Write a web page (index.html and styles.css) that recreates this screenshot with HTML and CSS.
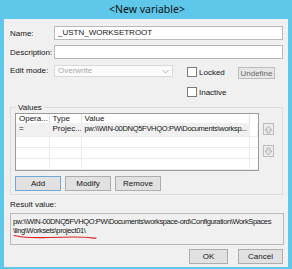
FILE: index.html
```html
<!DOCTYPE html>
<html>
<head>
<meta charset="utf-8">
<link rel="stylesheet" href="styles.css">
</head>
<body>
<div class="win">
  <div class="title">&lt;New variable&gt;</div>
  <div class="panel">
    <div class="row">
      <span class="lbl">Name:</span>
      <div class="input">_USTN_WORKSETROOT</div>
    </div>
    <div class="row row-desc">
      <span class="lbl">Description:</span>
      <div class="input"></div>
    </div>
    <div class="row row-mode">
      <span class="lbl lbl-mode">Edit mode:</span>
      <div class="select">
        <span>Overwrite</span>
        <svg class="chev" width="7" height="5" viewBox="0 0 7 5"><path d="M0.5 1 L3.5 4 L6.5 1" fill="none" stroke="#b5b5b5" stroke-width="1"/></svg>
      </div>
      <div class="checks">
        <div class="chk"><span class="box"></span><span>Locked</span></div>
        <div class="chk"><span class="box"></span><span>Inactive</span></div>
      </div>
      <div class="btn btn-undef">Undefine</div>
    </div>
    <fieldset class="group">
      <legend>Values</legend>
      <div class="lv-row">
        <div class="listview">
          <table>
            <tr class="hdr"><td class="c1">Opera...</td><td class="c2">Type</td><td class="c3">Value</td><td class="c4"></td></tr>
            <tr class="sel"><td>=</td><td>Projec...</td><td class="path">pw:\\WIN-00DNQ5FVHQO:PW\Documents\worksp...</td><td></td></tr>
            <tr class="empty"><td></td><td></td><td></td><td></td></tr>
            <tr class="empty"><td></td><td></td><td></td><td></td></tr>
            <tr class="empty"><td></td><td></td><td></td><td></td></tr>
          </table>
        </div>
        <div class="updown">
          <div class="arrbtn"><svg width="9" height="9" viewBox="0 0 9 9"><path d="M4.5 1 L8 5 L6 5 L6 8 L3 8 L3 5 L1 5 Z" fill="#e4e4e4" stroke="#a8a8a8" stroke-width="0.8"/></svg></div>
          <div class="arrbtn"><svg width="9" height="9" viewBox="0 0 9 9"><path d="M4.5 8 L8 4 L6 4 L6 1 L3 1 L3 4 L1 4 Z" fill="#e4e4e4" stroke="#a8a8a8" stroke-width="0.8"/></svg></div>
        </div>
      </div>
      <div class="btnrow">
        <div class="btn btn-main focus">Add</div>
        <div class="btn btn-main">Modify</div>
        <div class="btn btn-main">Remove</div>
      </div>
    </fieldset>
    <div class="res-lbl">Result value:</div>
    <div class="result">
      <div>pw:\\WIN-00DNQ5FVHQO:PW\Documents\workspace-ord\Configuration\WorkSpaces</div>
      <div>\ling\Worksets\project01\</div>
      <svg class="scribble" width="90" height="8" viewBox="0 0 90 8"><path d="M1 2.5 C10 4.5 22 5 35 4.5 C50 4 65 3.5 76 4.5 C80 5 82 5.5 83 5" fill="none" stroke="#d9221f" stroke-width="1.2" stroke-linecap="round"/></svg>
    </div>
    <div class="okrow">
      <div class="btn btn-ok">OK</div>
      <div class="btn btn-cancel">Cancel</div>
    </div>
  </div>
</div>
</body>
</html>
```
FILE: styles.css
```css
* { box-sizing: border-box; }
html, body { margin: 0; padding: 0; }
body {
  width: 292px;
  height: 269px;
  overflow: hidden;
  background: #5ec7ea;
  font-family: "Liberation Sans", Arial, sans-serif;
  font-size: 8px;
  color: #151515;
}
.win {
  width: 292px;
  height: 269px;
  padding: 0 4px 2px 4px;
  display: flex;
  flex-direction: column;
}
.title {
  height: 19px;
  line-height: 19px;
  text-align: center;
  font-family: "Noto Sans", "Open Sans", sans-serif;
  font-size: 10.5px;
  color: #111;
  padding-left: 2px;
}
.panel {
  flex: 1;
  background: #f0f0f0;
  padding: 7px 5px 0 6px;
  display: flex;
  flex-direction: column;
}
.row {
  display: flex;
  align-items: center;
}
.row-desc { margin-top: 5px; }
.lbl {
  width: 44px;
  flex: none;
}
.input {
  flex: 1;
  height: 14px;
  background: #fff;
  border: 1px solid #b9b9b9;
  padding-left: 3px;
  line-height: 12px;
}
.row-mode {
  margin-top: 6px;
  align-items: flex-start;
}
.lbl-mode { line-height: 12px; }
.select {
  width: 119px;
  height: 12px;
  border: 1px solid #d9d9d9;
  background: #fbfbfb;
  color: #a9a9a9;
  display: flex;
  align-items: center;
  justify-content: space-between;
  padding: 0 3px 0 3px;
  line-height: 10px;
}
.chev { display: block; }
.checks {
  margin-left: 14px;
  margin-top: 2px;
  display: flex;
  flex-direction: column;
  gap: 10px;
}
.chk {
  display: flex;
  align-items: center;
  gap: 2px;
  height: 10px;
}
.box {
  width: 10px;
  height: 10px;
  border: 1px solid #7c7c7c;
  background: #fff;
  display: block;
}
.btn {
  height: 15px;
  background: #e1e1e1;
  border: 1px solid #adadad;
  display: flex;
  align-items: center;
  justify-content: center;
  color: #151515;
}
.btn-undef {
  margin-left: auto;
  margin-right: 8px;
  margin-top: 2px;
  width: 37px;
  height: 12px;
  background: #e6e6e6;
  border-color: #bdbdbd;
  color: #6a6a6a;
}
.group {
  margin: 6px 0 0 0;
  padding: 1px 8px 3px 4px;
  border: 1px solid #dcdcdc;
  min-width: 0;
}
.group legend {
  padding: 0 2px;
  margin-left: 1px;
  line-height: 9px;
}
.lv-row {
  display: flex;
  align-items: flex-start;
}
.listview {
  width: 244px;
  height: 58px;
  border: 1px solid #9a9a9a;
  background: #fff;
  overflow: hidden;
}
table {
  border-collapse: collapse;
  width: 100%;
  table-layout: fixed;
}
td {
  padding: 0 0 0 3px;
  white-space: nowrap;
  overflow: hidden;
  border-right: 1px solid #ececec;
  border-bottom: 1px solid #ececec;
}
.hdr td {
  height: 9px;
  line-height: 8px;
  border-right: 1px solid #e3e3e3;
  border-bottom: none;
}
.c1 { width: 33px; }
.c2 { width: 32px; }
.c3 { width: 168px; }
.c4 { border-right: none !important; }
.sel td {
  height: 13px;
  background: #f0f0f0;
  border-right-color: #f0f0f0;
  line-height: 12px;
}
.sel td:last-child { background: #fff; }
.path {
  font-size: 7.5px;
  letter-spacing: -0.3px;
}
.empty td { height: 11px; }
.empty td:last-child { border-right: none; }
.updown {
  margin-left: 4px;
  margin-top: 10px;
  display: flex;
  flex-direction: column;
  gap: 10px;
}
.arrbtn {
  width: 11px;
  height: 12px;
  border: 1px solid #bcbcbc;
  background: #ececec;
  display: flex;
  align-items: center;
  justify-content: center;
}
.arrbtn svg { display: block; }
.btnrow {
  display: flex;
  gap: 4px;
  margin-top: 5px;
}
.btn-main { width: 46px; }
.focus { border-color: #6fa8d8; }
.res-lbl {
  margin-top: 5px;
  line-height: 10px;
}
.result {
  position: relative;
  margin-top: 3px;
  margin-right: -1px;
  height: 32px;
  border: 1px solid #b9b9b9;
  background: #f0f0f0;
  padding: 3px 0 0 2px;
  line-height: 9px;
  font-size: 7.5px;
  letter-spacing: -0.38px;
  white-space: nowrap;
  overflow: hidden;
}
.scribble {
  position: absolute;
  left: 2px;
  top: 19px;
}
.okrow {
  display: flex;
  justify-content: flex-end;
  gap: 10px;
  margin-top: 4px;
}
.btn-ok { width: 39px; }
.btn-cancel { width: 45px; }
```
